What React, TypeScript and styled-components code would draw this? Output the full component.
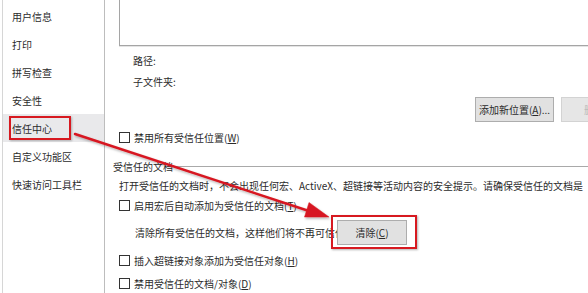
import React from 'react';
import styled, { createGlobalStyle } from 'styled-components';

const GlobalStyle = createGlobalStyle`
  html, body {
    margin: 0;
    padding: 0;
    background: #fff;
  }
  body {
    font-family: "Noto Sans CJK SC", "Noto Sans", sans-serif;
    font-size: 10px;
    color: #2b2b2b;
  }
`;

const navItems = ['用户信息', '打印', '拼写检查', '安全性', '信任中心', '自定义功能区', '快速访问工具栏'];
const activeNav = '信任中心';

const App: React.FC = () => {
  return (
    <>
      <GlobalStyle />
      <Window>
        <Sidebar>
          {navItems.map((item) => (
            <NavItem key={item} active={item === activeNav}>
              {item === activeNav ? <Marked>{item}</Marked> : item}
            </NavItem>
          ))}
        </Sidebar>

        <Main>
          <LocationList />
          <InfoRow top={3}>路径:</InfoRow>
          <InfoRow>子文件夹:</InfoRow>

          <ButtonRow>
            <Button>
              添加新位置(<U>A</U>)...
            </Button>
            <Button disabled>
              删除(<U>R</U>)
            </Button>
          </ButtonRow>

          <CheckRow top={6}>
            <Box />
            <span>
              禁用所有受信任位置(<U>W</U>)
            </span>
          </CheckRow>

          <GroupHeader>
            <span>受信任的文档</span>
            <Rule />
          </GroupHeader>

          <Description>
            打开受信任的文档时，不会出现任何宏、ActiveX、超链接等活动内容的安全提示。请确保受信任的文档是
          </Description>

          <CheckRow>
            <Box />
            <span>
              启用宏后自动添加为受信任的文档(<U>T</U>)
            </span>
          </CheckRow>

          <ClearRow>
            <ClearText>清除所有受信任的文档，这样他们将不再可信任</ClearText>
            <Highlighted>
              <ClearButton>
                清除(<U>C</U>)
              </ClearButton>
            </Highlighted>
          </ClearRow>

          <CheckRow top={6}>
            <Box />
            <span>
              插入超链接对象添加为受信任对象(<U>H</U>)
            </span>
          </CheckRow>
          <CheckRow top={3}>
            <Box />
            <span>
              禁用受信任的文档/对象(<U>D</U>)
            </span>
          </CheckRow>
        </Main>

        <Annotation viewBox="0 0 588 293" width="588" height="293">
          <defs>
            <filter id="shadow" x="-10%" y="-10%" width="120%" height="130%">
              <feDropShadow dx="1" dy="1.5" stdDeviation="0.8" floodColor="#000" floodOpacity="0.3" />
            </filter>
          </defs>
          <g filter="url(#shadow)" fill="#d71920" stroke="#d71920">
            <line x1="75" y1="134" x2="312" y2="212" strokeWidth="2.4" strokeLinecap="round" />
            <polygon points="329,217 309,202.5 304.5,217" strokeWidth="0.5" strokeLinejoin="round" />
          </g>
        </Annotation>
      </Window>
    </>
  );
};

export default App;

// Styled-components
const Window = styled.div`
  position: relative;
  display: flex;
  width: 588px;
  height: 293px;
  overflow: hidden;
  background: #fff;
`;

const Sidebar = styled.nav`
  flex: 0 0 101px;
  margin-left: 2px;
  padding-top: 2px;
  border-left: 1px solid #d6d6d6;
  border-right: 1px solid #bdbdbd;
  display: flex;
  flex-direction: column;
`;

const NavItem = styled.div<{ active?: boolean }>`
  height: 28px;
  display: flex;
  align-items: center;
  padding-left: 9px;
  background: ${({ active }) => (active ? '#e9e9eb' : 'transparent')};
  white-space: nowrap;
`;

const Marked = styled.span`
  display: inline-flex;
  align-items: center;
  height: 20px;
  margin-left: -3px;
  padding: 0 17px 0 1px;
  border: 2px solid #d71920;
  box-shadow: 1px 1px 2px rgba(0, 0, 0, 0.25);
`;

const Main = styled.main`
  flex: 1;
  min-width: 0;
  display: flex;
  flex-direction: column;
  padding-left: 14px;
`;

const LocationList = styled.div`
  height: 46px;
  margin-right: -40px;
  border: 1px solid #a5a5a5;
  border-top: none;
  box-shadow: 0 1px 0 #e4e4e4;
`;

const InfoRow = styled.div<{ top?: number }>`
  height: 22px;
  display: flex;
  align-items: center;
  padding-left: 14px;
  margin-top: ${({ top }) => top ?? 0}px;
`;

const ButtonRow = styled.div`
  display: flex;
  justify-content: flex-end;
  gap: 7px;
  margin-top: 4px;
  margin-right: -52px;
`;

const Button = styled.button`
  height: 25px;
  width: 79px;
  padding: 0;
  font: inherit;
  color: #2b2b2b;
  background: #e1e1e1;
  border: 1px solid #adadad;

  &:disabled {
    color: #bcbcbc;
    background: #e6e6e6;
    border-color: #d3d3d3;
  }
`;

const U = styled.span`
  text-decoration: underline;
`;

const CheckRow = styled.label<{ top?: number }>`
  display: flex;
  align-items: center;
  gap: 4px;
  height: 20px;
  margin-top: ${({ top }) => top ?? 0}px;
  white-space: nowrap;
`;

const Box = styled.span`
  flex: 0 0 auto;
  width: 9px;
  height: 9px;
  border: 1px solid #333;
  background: #fff;
`;

const GroupHeader = styled.div`
  display: flex;
  align-items: center;
  gap: 2px;
  height: 20px;
  margin-top: 9px;
  margin-left: -6px;
  white-space: nowrap;
`;

const Rule = styled.div`
  flex: 1;
  height: 1px;
  margin-right: -20px;
  background: #a9a9a9;
`;

const Description = styled.div`
  height: 20px;
  line-height: 20px;
  white-space: nowrap;
`;

const ClearRow = styled.div`
  display: flex;
  align-items: center;
  margin-top: 4px;
  padding-left: 16px;
  height: 25px;
  white-space: nowrap;
`;

const ClearText = styled.span`
  width: 202px;
  overflow: hidden;
`;

const Highlighted = styled.div`
  position: relative;
  &::after {
    content: '';
    position: absolute;
    top: -5px;
    right: -10px;
    bottom: -4px;
    left: -6px;
    border: 2px solid #d71920;
    box-shadow: 1px 1px 2px rgba(0, 0, 0, 0.3);
    pointer-events: none;
  }
`;

const ClearButton = styled(Button)`
  width: 70px;
`;

const Annotation = styled.svg`
  position: absolute;
  left: 0;
  top: 0;
  pointer-events: none;
`;
